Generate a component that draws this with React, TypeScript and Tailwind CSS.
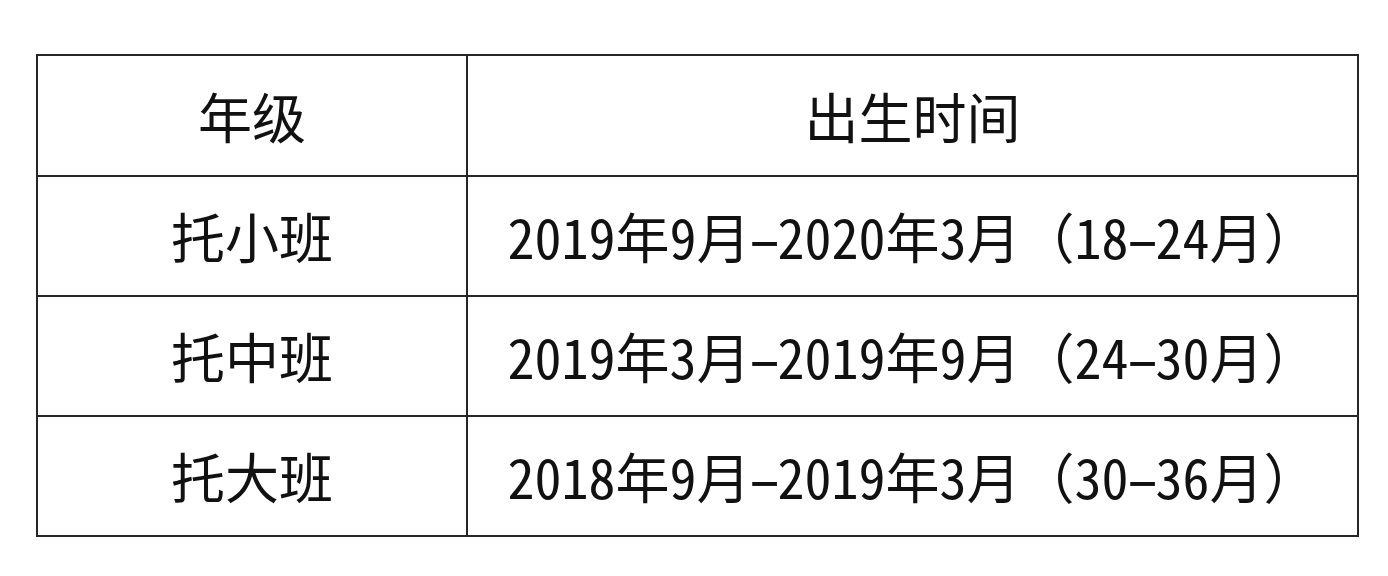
const rows = [
  { grade: '托小班', time: '2019年9月-2020年3月（18-24月）' },
  { grade: '托中班', time: '2019年3月-2019年9月（24-30月）' },
  { grade: '托大班', time: '2018年9月-2019年3月（30-36月）' },
];

// digits use half-width forms; the dash is stretched so it is as long as in the original
function Time({ text }: { text: string }) {
  const parts = text.split(/(\d+|-)/).filter(Boolean);
  return (
    <>
      {parts.map((p, i) =>
        p === '-' ? (
          <span key={i} className="inline-block w-[27px] text-center">
            <span className="inline-block scale-x-[1.6] [font-feature-settings:'hwid']">-</span>
          </span>
        ) : /\d/.test(p) ? (
          <span key={i} className="[font-feature-settings:'hwid']">
            {p}
          </span>
        ) : (
          <span key={i}>{p}</span>
        )
      )}
    </>
  );
}

export default function App() {
  return (
    <div className="w-[1388px] h-[576px] bg-white pt-[54px] pl-[36px]">
      <table
        className="border-collapse text-[#111] text-[54px] leading-none"
        style={{ fontFamily: '"Noto Sans CJK SC", "Noto Sans", sans-serif' }}
      >
        <thead>
          <tr className="h-[121px]">
            <th className="w-[430px] border-2 border-[#262626] font-normal text-center">年级</th>
            <th className="w-[891px] border-2 border-[#262626] font-normal text-center">出生时间</th>
          </tr>
        </thead>
        <tbody>
          {rows.map((r) => (
            <tr key={r.grade} className="h-[120px]">
              <td className="border-2 border-[#262626] text-center">{r.grade}</td>
              <td className="border-2 border-[#262626] text-center">
                <Time text={r.time} />
              </td>
            </tr>
          ))}
        </tbody>
      </table>
    </div>
  );
}
